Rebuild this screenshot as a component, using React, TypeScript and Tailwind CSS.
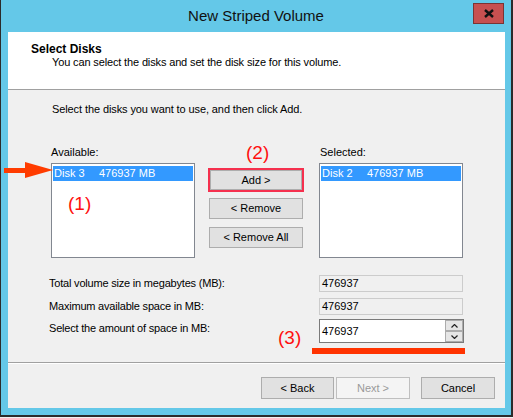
import React from 'react'

function Btn({ label, className = '' }: { label: string; className?: string }) {
  return (
    <button className={`flex items-center justify-center border border-[#adadad] bg-[#e1e1e1] text-[11px] text-black ${className}`}>
      {label}
    </button>
  )
}

function ListBox({ disk }: { disk: string }) {
  return (
    <div className="h-[95px] w-[144px] border border-[#828790] bg-white px-px pt-[2px]">
      <div className="flex h-[15px] items-center bg-[#3399ff] pl-px text-[11px] leading-[13px] text-white">
        <span className="w-[45px]">{disk}</span>
        <span>476937 MB</span>
      </div>
    </div>
  )
}

function ReadField({ value }: { value: string }) {
  return (
    <div className="flex h-[17px] w-[144px] items-center border border-[#cccccc] bg-[#f0f0f0] pl-[2px] text-[11px] text-black">
      {value}
    </div>
  )
}

export default function App() {
  return (
    <div className="relative h-[418px] w-[513px] bg-[#f0f0f0] font-['Liberation_Sans',Arial,sans-serif] text-black">
      <div className="flex h-[417px] w-[513px] flex-col border-b-2 border-l border-r-2 border-[#2b2b2b] bg-[#64c8e8]">
        {/* title bar */}
        <div className="relative flex h-[32px] shrink-0 items-center justify-center">
          <span className="text-[15px] leading-[18px] text-[#111]">New Striped Volume</span>
          <div className="absolute right-[7px] top-[3px] flex h-[21px] w-[31px] items-center justify-center border border-[#7a3434] bg-[#c75050]">
            <svg width="10" height="9" viewBox="0 0 10 9">
              <path d="M1 1 L9 8 M9 1 L1 8" stroke="#111" strokeWidth="2.4" />
            </svg>
          </div>
        </div>

        {/* wizard panel */}
        <div className="ml-[7px] flex h-[376px] w-[497px] shrink-0 flex-col bg-[#f0f0f0]">
          <div className="h-[58px] shrink-0 border-b border-[#a0a0a0] bg-white pl-[23px] pt-[10px]">
            <div className="text-[12px] font-bold leading-[14px]">Select Disks</div>
            <div className="ml-[21px] text-[11px] leading-[13px] tracking-[-0.14px]">You can select the disks and set the disk size for this volume.</div>
          </div>

          <div className="flex h-[272px] shrink-0 flex-col text-[11px] leading-[13px]">
            <div className="ml-[44px] mt-[13px] tracking-[-0.1px]">Select the disks you want to use, and then click Add.</div>

            <div className="ml-[43px] mt-[30px] flex">
              <div className="flex flex-col">
                <div className="mb-[4px] h-[13px]">Available:</div>
                <ListBox disk="Disk 3" />
              </div>
              <div className="ml-[13px] flex flex-col pt-[22px]">
                <div className="h-[24px] w-[96px] border-2 border-[#f5304e] bg-[#e1e1e1]">
                  <Btn label="Add >" className="h-full w-full" />
                </div>
                <Btn label="< Remove" className="ml-px mt-[6px] h-[21px] w-[94px]" />
                <Btn label="< Remove All" className="ml-px mt-[8px] h-[21px] w-[94px]" />
              </div>
              <div className="ml-[15px] flex flex-col">
                <div className="mb-[4px] h-[13px] pl-px">Selected:</div>
                <ListBox disk="Disk 2" />
              </div>
            </div>

            <div className="ml-[41px] mt-[17px] flex h-[17px] items-center">
              <div className="w-[270px] tracking-[-0.2px]">Total volume size in megabytes (MB):</div>
              <ReadField value="476937" />
            </div>
            <div className="ml-[41px] mt-[6px] flex h-[17px] items-center">
              <div className="w-[270px] tracking-[-0.2px]">Maximum available space in MB:</div>
              <ReadField value="476937" />
            </div>
            <div className="ml-[41px] mt-[4px] flex h-[24px]">
              <div className="mt-[3px] w-[270px] tracking-[-0.2px]">Select the amount of space in MB:</div>
              <div className="flex h-[24px] w-[145px] border border-[#7a7a7a] bg-white">
                <div className="flex flex-1 items-center pl-[2px]">476937</div>
                <div className="flex w-[18px] flex-col">
                  <div className="flex h-[11px] items-center justify-center border border-[#acacac] bg-[#e6e6e6]">
                    <svg width="7" height="4" viewBox="0 0 7 4">
                      <path d="M0.5 3.5 L3.5 0.5 L6.5 3.5" stroke="#222" strokeWidth="1.2" fill="none" />
                    </svg>
                  </div>
                  <div className="flex h-[11px] items-center justify-center border border-[#acacac] bg-[#e6e6e6]">
                    <svg width="7" height="4" viewBox="0 0 7 4">
                      <path d="M0.5 0.5 L3.5 3.5 L6.5 0.5" stroke="#222" strokeWidth="1.2" fill="none" />
                    </svg>
                  </div>
                </div>
              </div>
            </div>
          </div>

          <div className="h-px shrink-0 bg-[#a0a0a0]" />

          <div className="flex h-[45px] shrink-0 items-start justify-end border-t border-white pr-[10px] pt-[13px]">
            <Btn label="< Back" className="h-[22px] w-[73px] border-[#3c7fb1]" />
            <button className="ml-[2px] flex h-[22px] w-[74px] items-center justify-center border border-[#bfbfbf] bg-[#f4f4f4] text-[11px] text-[#9a9a9a]">
              Next &gt;
            </button>
            <Btn label="Cancel" className="ml-[11px] h-[22px] w-[74px]" />
          </div>
        </div>
      </div>

      {/* annotations */}
      <svg className="absolute left-[3px] top-[161px]" width="51" height="18" viewBox="0 0 51 18">
        <rect x="1" y="7" width="23" height="5" fill="#ff3c00" />
        <polygon points="22,1 22,17 50,9" fill="#ff3c00" />
      </svg>
      <span className="absolute left-[68px] top-[194px] text-[19px] leading-[19px] text-[#ff1010]">(1)</span>
      <span className="absolute left-[246px] top-[143px] text-[19px] leading-[19px] text-[#ff1010]">(2)</span>
      <span className="absolute left-[278px] top-[328px] text-[19px] leading-[19px] text-[#ff1010]">(3)</span>
      <div className="absolute left-[312px] top-[348px] h-[6px] w-[153px] bg-[#ff3300]" />
    </div>
  )
}
